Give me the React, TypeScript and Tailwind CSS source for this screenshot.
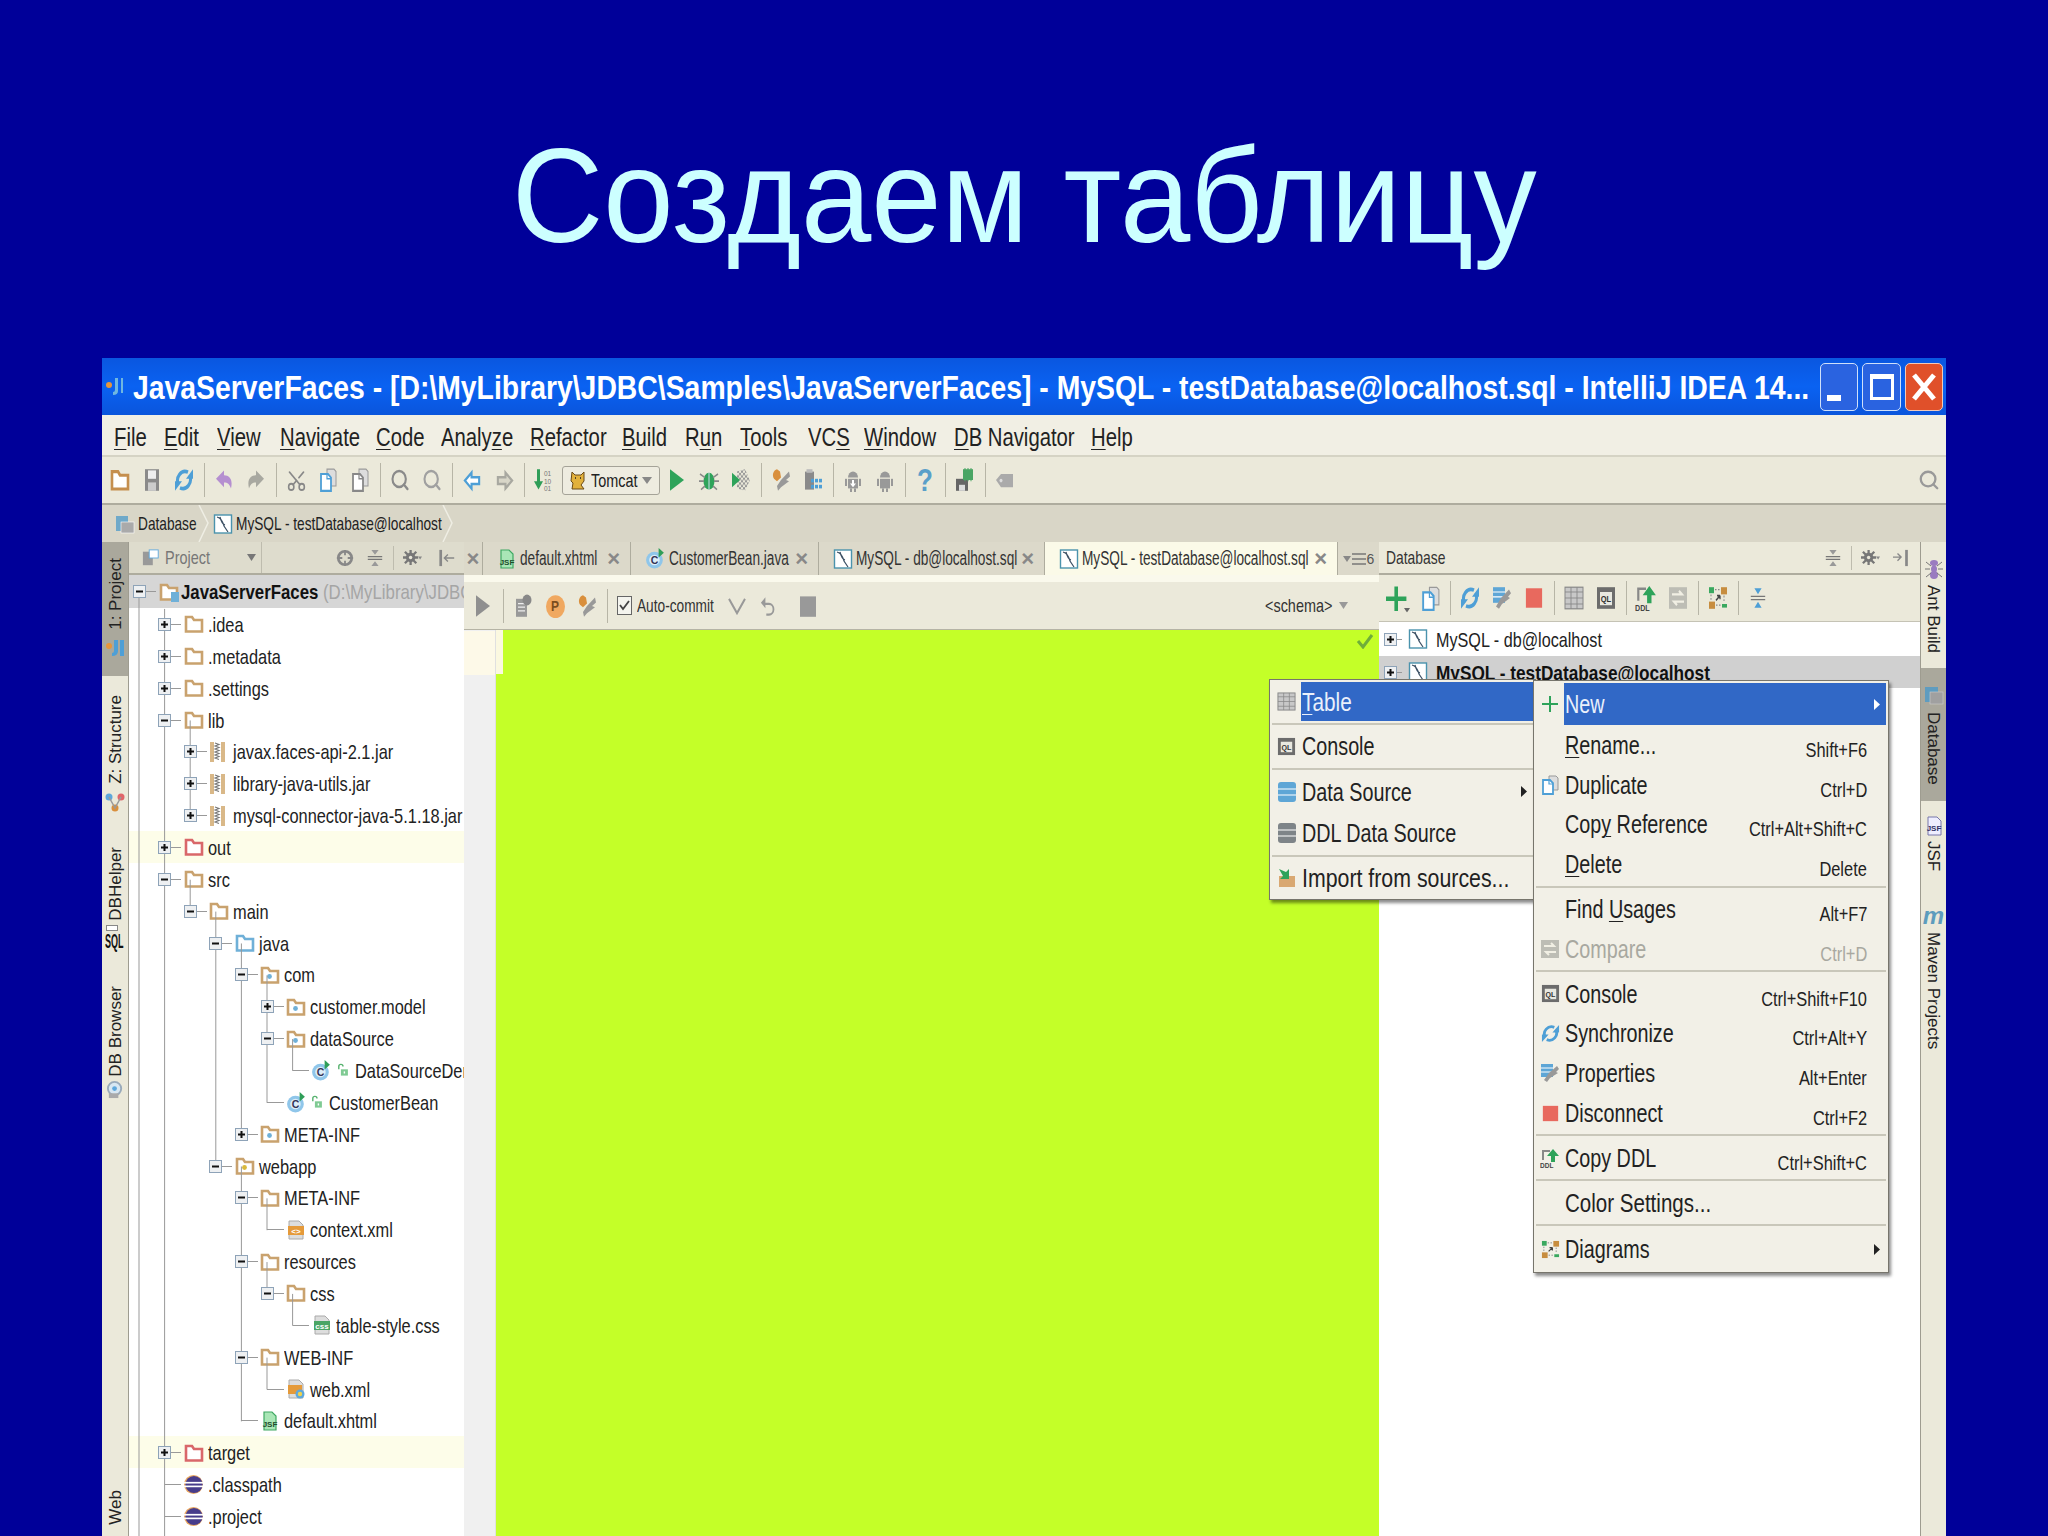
import React from 'react';
import { Scissors, Search } from 'lucide-react';

// text in the shot is a stretched capture, so everything is narrower than the font
const T = ({ children, s = 'scale-x-[0.76]', className = '' }: { children: React.ReactNode; s?: string; className?: string }) => (
  <span className={`inline-block origin-left whitespace-nowrap ${s} ${className}`}>{children}</span>
);

const I = ({ children, size = 20 }: { children: React.ReactNode; size?: number }) => (
  <svg viewBox="0 0 20 20" width={size} height={size} className="shrink-0">{children}</svg>
);

const Folder = ({ c = '#c9a26e', dot, size = 20, corner }: { c?: string; dot?: string; size?: number; corner?: boolean }) => (
  <I size={size}>
    <path d="M2 17.5V3h6l2 3h8v11.5z" fill="#fff" stroke={c} strokeWidth="2.6" />
    {dot && <circle cx="9.5" cy="11.5" r="2.4" fill={dot} />}
    {corner && <rect x="12" y="10" width="8" height="10" fill="#6fb0d8" />}
  </I>
);
const MySql = ({ size = 20 }: { size?: number }) => (
  <I size={size}>
    <rect x="1.5" y="1" width="17" height="18" fill="#fff" stroke="#4a93ad" strokeWidth="1.4" />
    <path d="M4 3c4 1 6 5 7 9l4 6M7 3c1 4 2 7 5 8" fill="none" stroke="#3b4f63" strokeWidth="1.2" />
  </I>
);
const Jar = () => (
  <I size={20}>
    <rect x="1" y="0" width="4" height="20" fill="#d9b888" />
    <rect x="12" y="0" width="4" height="20" fill="#d9b888" />
    <path d="M6 1l4 1.500-4 1.500 4 1.500-4 1.500 4 1.500-4 1.500 4 1.500-4 1.500 4 1.500-4 1.500 4 1.500" fill="none" stroke="#777" strokeWidth="1.100" />
  </I>
);
const ClassIcon = () => (
  <I size={21}>
    <circle cx="9" cy="11.500" r="8" fill="#8fc6ea" />
    <circle cx="9" cy="11.500" r="5" fill="#dcedf8" />
    <text x="5.500" y="15" fontSize="10" fontFamily="Liberation Sans" fontWeight="700" fill="#335">C</text>
    <path d="M13 0l5 4.500-5 4.500z" fill="#2f9e58" />
  </I>
);
const Lock = () => (
  <I size={14}>
    <path d="M4 9V5a3 3 0 0 1 6 0" fill="none" stroke="#57b26f" strokeWidth="2" />
    <rect x="7" y="9" width="10" height="9" fill="#7fca93" />
    <rect x="11" y="12" width="2" height="3" fill="#fff" />
  </I>
);
const DocFile = ({ c, label }: { c: string; label: string }) => (
  <I size={20}>
    <path d="M3 1h10l4 4v14H3z" fill="#ddd" stroke="#aaa" />
    <rect x="2" y="6" width="16" height="9" fill={c} />
    <text x="10" y="13.500" textAnchor="middle" fontSize="8" fontWeight="700" fontFamily="Liberation Sans" fill="#fff">{label}</text>
  </I>
);
const WebXml = () => (
  <I size={20}>
    <path d="M3 1h10l4 4v14H3z" fill="#ddd" stroke="#aaa" />
    <rect x="2" y="6" width="14" height="9" fill="#e59a3a" />
    <circle cx="14" cy="15" r="4.500" fill="#5da7dc" />
    <circle cx="14" cy="15" r="2.200" fill="#f0d24a" />
  </I>
);
const Jsf = () => (
  <I size={20}>
    <path d="M4 1h8l4 4v14H4z" fill="#a9e6b6" stroke="#3ea862" strokeWidth="1.200" />
    <text x="10" y="16" textAnchor="middle" fontSize="8" fontWeight="700" fontFamily="Liberation Sans" fill="#1e4d2d">JSF</text>
  </I>
);
const Eclipse = () => (
  <I size={21}>
    <circle cx="10" cy="10" r="9" fill="#e8a55f" />
    <circle cx="10.500" cy="10" r="8.200" fill="#473c8b" />
    <rect x="1" y="7.500" width="18.500" height="1.600" fill="#fff" />
    <rect x="1" y="11" width="18.500" height="1.600" fill="#fff" />
  </I>
);
const Sync = ({ size = 20 }: { size?: number }) => (
  <I size={size}>
    <path d="M14 3.500A7.500 7.500 0 0 0 4.500 14" fill="none" stroke="#4e9fd6" strokeWidth="3" />
    <path d="M6 16.500A7.500 7.500 0 0 0 15.500 6" fill="none" stroke="#4e9fd6" strokeWidth="3" />
    <path d="M12 9l7-8v8zM8 11l-7 8v-8z" fill="#4e9fd6" />
  </I>
);
const Turn = ({ c, flip }: { c: string; flip?: boolean }) => (
  <I>
    <path d="M2 9l8-7v4c6 0 9 4 7 11-2-4-3-5-7-5v4z" fill={c} transform={flip ? 'matrix(-1 0 0 1 20 0)' : undefined} />
  </I>
);
const Docs = ({ c = '#4e9fd6', size = 20 }: { c?: string; size?: number }) => (
  <I size={size}>
    <path d="M9 1h7l2 2v12H9z" fill="#ddd" stroke="#999" />
    <path d="M3 5h7l3 3v11H3z" fill="#fff" stroke={c} strokeWidth="1.800" />
    <path d="M9 5v4h4" fill="none" stroke={c} strokeWidth="1.200" />
  </I>
);
const Arrow = ({ c, fill = '#fff', flip }: { c: string; fill?: string; flip?: boolean }) => (
  <I size={19}>
    <path d="M9 3L2 10l7 7v-4h8V7H9z" fill={fill} stroke={c} strokeWidth="2.200" transform={flip ? 'matrix(-1 0 0 1 20 0)' : undefined} />
  </I>
);
const Make = () => (
  <I>
    <path d="M3 1h3v10h3l-4.500 7L0 11h3z" fill="#2f9e58" />
    <text x="10" y="7" fontSize="6.500" fontFamily="Liberation Sans" fill="#777">01</text>
    <text x="10" y="13" fontSize="6.500" fontFamily="Liberation Sans" fill="#777">10</text>
    <text x="10" y="19" fontSize="6.500" fontFamily="Liberation Sans" fill="#777">01</text>
  </I>
);
const Cat = () => (
  <I size={20}>
    <path d="M4 2l3 3h6l3-3v9l-3 4 3 4H4l1-6-2-2z" fill="#e2b13c" stroke="#6b4a16" strokeWidth="1" />
    <path d="M7 8h1M12 8h1" stroke="#222" strokeWidth="1.400" />
  </I>
);
const Play = ({ c = '#2ea35a' }: { c?: string }) => <I size={20}><path d="M3 1l14 9-14 9z" fill={c} /></I>;
const Bug = () => (
  <I>
    <ellipse cx="10" cy="11" rx="5.500" ry="7" fill="#2ea35a" />
    <path d="M10 4v14" stroke="#cde" strokeWidth="1" />
    <path d="M1 5l5 3M19 5l-5 3M0 11h5M20 11h-5M2 18l4-3M18 18l-4-3" stroke="#888" strokeWidth="1.400" />
  </I>
);
const Coverage = () => (
  <I>
    <defs><pattern id="cov" width="4" height="4" patternUnits="userSpaceOnUse"><rect width="2" height="2" fill="#999" /><rect x="2" y="2" width="2" height="2" fill="#999" /></pattern></defs>
    <path d="M6 3l8-2 5 9-5 9-8-2z" fill="url(#cov)" />
    <path d="M1 4l8 6-8 6z" fill="#2ea35a" />
  </I>
);
const Wrench = ({ top = '#d98f3c' }: { top?: string }) => (
  <I>
    <path d="M6 1a5 5 0 0 0-3 8l3 2 4-3-1-5z" fill={top} />
    <path d="M10 10l8-7 1 4-4 3 3 1-8 5-3 3-1-4z" fill="#999" />
  </I>
);
const Struct = () => (
  <I>
    <rect x="2" y="3" width="9" height="15" fill="#8a8a8a" />
    <rect x="3.500" y="1" width="6" height="3" fill="#bbb" />
    <g fill="#4e9fd6">
      <rect x="8" y="9" width="3" height="3" /><rect x="12" y="9" width="3" height="3" /><rect x="16" y="9" width="3" height="3" />
      <rect x="8" y="14" width="3" height="3" /><rect x="12" y="14" width="3" height="3" /><rect x="16" y="14" width="3" height="3" />
    </g>
  </I>
);
const Droid = ({ down }: { down?: boolean }) => (
  <I>
    <path d="M5 8a5 5 0 0 1 10 0z" fill="#999" />
    <rect x="5" y="9" width="10" height="8" fill="#999" />
    <rect x="2" y="9" width="2" height="6" fill="#999" /><rect x="16" y="9" width="2" height="6" fill="#999" />
    <rect x="7" y="17" width="2" height="3" fill="#999" /><rect x="11" y="17" width="2" height="3" fill="#999" />
    {down && <path d="M9 10h2v3h2l-3 3-3-3h2z" fill="#fff" />}
  </I>
);
const Sdk = () => (
  <I>
    <rect x="1" y="9" width="12" height="10" fill="#666" />
    <rect x="4" y="14" width="6" height="5" fill="#ddd" />
    <rect x="8" y="1" width="10" height="9" fill="#4aa564" />
    <path d="M10 0v11M13 0v11M16 0v11" stroke="#4aa564" />
  </I>
);
const Tag = () => <I><path d="M1 10l5-5h12v11H6z" fill="#aaa" /><circle cx="6" cy="10.500" r="1.500" fill="#ddd" /></I>;
const Stop = ({ c = '#e8695e', size = 18 }: { c?: string; size?: number }) => <I size={size}><rect x="1" y="1" width="18" height="18" fill={c} /></I>;
const Grid = ({ size = 20 }: { size?: number }) => (
  <I size={size}>
    <rect x="1" y="1" width="18" height="18" fill="#c8c8c8" stroke="#888" />
    <path d="M1 5h18M1 10h18M1 15h18M7 1v18M13 1v18" stroke="#888" strokeWidth=".8" />
  </I>
);
const Console = ({ size = 20 }: { size?: number }) => (
  <I size={size}>
    <rect x="1" y="1" width="18" height="18" fill="#6c6c6c" />
    <rect x="4" y="5" width="12" height="11" fill="#e8e8e0" />
    <text x="10" y="13.500" textAnchor="middle" fontSize="7.500" fontWeight="700" fontFamily="Liberation Sans" fill="#333">QL</text>
  </I>
);
const Stack = ({ c }: { c: string }) => (
  <I size={20}>
    <rect x="1" y="0" width="18" height="20" rx="3" fill={c} />
    <path d="M1 7h18M1 13h18" stroke="#fff" strokeWidth="1.200" />
  </I>
);
const Ddl = ({ size = 20 }: { size?: number }) => (
  <I size={size}>
    <path d="M3 12V3h7" fill="none" stroke="#888" strokeWidth="2" />
    <path d="M13 1l6 7h-4v6h-4V8H7z" fill="#2ea35a" />
    <text x="0" y="19.500" fontSize="6.500" fontWeight="700" fontFamily="Liberation Sans" fill="#444">DDL</text>
  </I>
);
const Compare = () => (
  <I>
    <rect x="1" y="1" width="18" height="18" fill="#bdbdb5" />
    <path d="M4 7h10l-3-3M16 13H6l3 3" fill="none" stroke="#f1efe4" strokeWidth="2" />
  </I>
);
const Diagram = ({ size = 20 }: { size?: number }) => (
  <I size={size}>
    <rect x="1" y="1" width="5" height="5" fill="#3aa85f" />
    <rect x="13" y="1" width="6" height="6" fill="#c78d3f" />
    <rect x="1" y="13" width="6" height="6" fill="#c78d3f" />
    <rect x="14" y="15" width="5" height="3" fill="#3aa85f" />
    <path d="M7 3h6M3 7v6M8 16h6M16 8v6" stroke="#888" strokeDasharray="1.500 1.500" />
    <path d="M8 12l4-4M12 8H9M12 8v3" fill="none" stroke="#444" strokeWidth="1.300" />
  </I>
);
const Collapse = ({ c = '#4e9fd6' }: { c?: string }) => (
  <I size={18}>
    <path d="M2 8.500h16M2 11.500h16" stroke="#777" strokeWidth="1.300" />
    <path d="M6 1h8l-4 5.500zM6 19h8l-4-5.500z" fill={c} />
  </I>
);
const Gear = () => (
  <I size={19}>
    <circle cx="8" cy="10" r="5" fill="#777" />
    <path d="M8 2v16M2 4l12 12M14 4L2 16M0 10h16" stroke="#777" strokeWidth="2.400" />
    <circle cx="8" cy="10" r="1.800" fill="#e8e6d8" />
    <path d="M16 9h4l-2 3z" fill="#888" />
  </I>
);
const PropsIcon = () => (
  <I size={20}>
    <rect x="1" y="1" width="12" height="13" fill="#5ea6d6" />
    <path d="M1 5h12M1 9h12" stroke="#fff" />
    <path d="M9 10l8-7 2 3-3 3 2 1-8 5-3 4-3-2z" fill="#999" />
  </I>
);

// ---- tree

type Node = { t: string; l: number; i: React.ReactNode; open?: boolean; leaf?: boolean; hl?: boolean; lock?: boolean };

const plain = <Folder />;
const pkg = <Folder dot="#6fb0d8" />;

const nodes: Node[] = [
  { t: '.idea', l: 1, i: plain },
  { t: '.metadata', l: 1, i: plain },
  { t: '.settings', l: 1, i: plain },
  { t: 'lib', l: 1, i: plain, open: true },
  { t: 'javax.faces-api-2.1.jar', l: 2, i: <Jar /> },
  { t: 'library-java-utils.jar', l: 2, i: <Jar /> },
  { t: 'mysql-connector-java-5.1.18.jar', l: 2, i: <Jar /> },
  { t: 'out', l: 1, i: <Folder c="#d9676a" />, hl: true },
  { t: 'src', l: 1, i: plain, open: true },
  { t: 'main', l: 2, i: plain, open: true },
  { t: 'java', l: 3, i: <Folder c="#6fb0d8" />, open: true },
  { t: 'com', l: 4, i: pkg, open: true },
  { t: 'customer.model', l: 5, i: pkg },
  { t: 'dataSource', l: 5, i: pkg, open: true },
  { t: 'DataSourceDemo', l: 6, i: <ClassIcon />, leaf: true, lock: true },
  { t: 'CustomerBean', l: 5, i: <ClassIcon />, leaf: true, lock: true },
  { t: 'META-INF', l: 4, i: pkg },
  { t: 'webapp', l: 3, i: <Folder dot="#d9b93c" />, open: true },
  { t: 'META-INF', l: 4, i: plain, open: true },
  { t: 'context.xml', l: 5, i: <DocFile c="#e59a3a" label="<>" />, leaf: true },
  { t: 'resources', l: 4, i: plain, open: true },
  { t: 'css', l: 5, i: plain, open: true },
  { t: 'table-style.css', l: 6, i: <DocFile c="#4aa564" label="css" />, leaf: true },
  { t: 'WEB-INF', l: 4, i: plain, open: true },
  { t: 'web.xml', l: 5, i: <WebXml />, leaf: true },
  { t: 'default.xhtml', l: 4, i: <Jsf />, leaf: true },
  { t: 'target', l: 1, i: <Folder c="#d9676a" />, hl: true },
  { t: '.classpath', l: 1, i: <Eclipse />, leaf: true },
  { t: '.project', l: 1, i: <Eclipse />, leaf: true },
];

// [level, from row, to row]
const guides: [number, number, number][] = [
  [0, 0, 40], [1, 0.5, 40], [2, 4, 7], [2, 9, 10], [3, 10, 18], [4, 11, 17], [4, 18, 26],
  [5, 12, 16], [5, 19, 20], [5, 21, 22], [5, 24, 25], [6, 14, 15], [6, 22, 23],
];

const Expander = ({ open }: { open?: boolean }) => (
  <svg width="13" height="13" viewBox="0 0 13 13" className="relative shrink-0">
    <rect x=".5" y=".5" width="12" height="12" fill="#eef0f2" stroke="#8ea3b8" />
    <rect x="3" y="5.500" width="7" height="2" fill="#111" />
    {!open && <rect x="5.500" y="3" width="2" height="7" fill="#111" />}
  </svg>
);

const TreeRow = ({ n }: { n: Node }) => (
  <div className={`flex h-[31.86px] items-center pt-[1px] ${n.hl ? 'bg-[#fdfde9]' : ''}`} style={{ paddingLeft: 3.5 + n.l * 25.6 }}>
    {n.leaf ? <div className="w-[6.5px] shrink-0" /> : <Expander open={n.open} />}
    <div className={`mr-[3.5px] h-px shrink-0 bg-[#999] ${n.leaf ? 'w-[16.5px]' : 'w-[10px]'}`} />
    <div className="flex w-[18px] shrink-0 justify-center">{n.i}</div>
    {n.lock && <div className="ml-[5px] shrink-0"><Lock /></div>}
    <div className="ml-[5px] text-[21px] leading-none text-[#222]"><T s="scale-x-[0.78]">{n.t}</T></div>
  </div>
);

const ProjectTree = () => (
  <div className="relative flex-1 overflow-hidden bg-white">
    <svg className="absolute left-0 top-0" width="335" height="970">
      {guides.map(([l, a, b], k) => (
        <line key={k} x1={10 + l * 25.6} x2={10 + l * 25.6} y1={18 + a * 31.86} y2={18 + b * 31.86} stroke="#999" />
      ))}
    </svg>
    <div className="flex h-[33px] items-center bg-[#d6d6d6] pl-[3.5px]">
      <Expander open />
      <div className="mr-[3.5px] h-px w-[10px] shrink-0 bg-[#999]" />
      <Folder corner />
      <div className="ml-[2px] whitespace-nowrap text-[21px] leading-none">
        <T s="scale-x-[0.8]" className="font-bold text-[#111]">JavaServerFaces <span className="font-normal text-[#a5a5a5]">(D:\MyLibrary\JDBC</span></T>
      </div>
    </div>
    {nodes.map((n, i) => <TreeRow key={i} n={n} />)}
  </div>
);

// ---- bars

const menus: [string, number, number][] = [
  ['File', 0, 32], ['Edit', 0, 35], ['View', 0, 45], ['Navigate', 0, 78], ['Code', 0, 47], ['Analyze', 5, 71], ['Refactor', 0, 74],
  ['Build', 0, 45], ['Run', 1, 37], ['Tools', 0, 50], ['VCS', 2, 38], ['Window', 0, 72], ['DB Navigator', 0, 119], ['Help', 0, 41],
];

const Mn = ({ text, at }: { text: string; at: number }) => (
  <>
    {at >= 0 ? text.slice(0, at) : text}
    {at >= 0 && <span className="underline decoration-1 underline-offset-3">{text[at]}</span>}
    {at >= 0 && text.slice(at + 1)}
  </>
);

// toolbar slot: the capture stretches icons a little taller than wide
const B = ({ children }: { children: React.ReactNode }) => <div className="flex h-[32px] w-[32px] shrink-0 scale-y-[1.2] items-center justify-center">{children}</div>;
const Sep = () => <div className="flex h-[34px] w-[8px] shrink-0 justify-center"><div className="h-full w-px bg-[#b7b5a6]" /></div>;

const Vert = ({ children, up }: { children: React.ReactNode; up?: boolean }) => (
  <span className={`block whitespace-nowrap text-[17px] leading-none text-[#222] [writing-mode:vertical-rl] ${up ? 'rotate-180' : ''}`}>{children}</span>
);

const TitleBar = () => (
  <div className="flex h-[57px] items-center bg-gradient-to-b from-[#0a57e0] via-[#0a62f2] to-[#0a55dc] pl-[3px] pr-[3px]">
    <svg width="20" height="22" viewBox="0 0 20 22" className="shrink-0">
      <circle cx="4" cy="9" r="3" fill="#e8953a" />
      <path d="M10 2h3v13q0 4-5 4v-3q2 0 2-2zM16 2h2v15h-2z" fill="#6fb7e0" />
    </svg>
    <div className="ml-[8px] min-w-0 flex-1 text-[34px] font-bold leading-none text-white">
      <T s="scale-x-[0.834]">JavaServerFaces - [D:\MyLibrary\JDBC\Samples\JavaServerFaces] - MySQL - testDatabase@localhost.sql - IntelliJ IDEA 14...</T>
    </div>
    <div className="flex gap-[4px]">
      <div className="flex h-[48px] w-[38px] items-end rounded-[5px] border border-[#cfe0fa] bg-[#2a63e0] pb-[9px] pl-[6px]">
        <div className="h-[6px] w-[14px] bg-white" />
      </div>
      <div className="flex h-[48px] w-[39px] items-center justify-center rounded-[5px] border border-[#cfe0fa] bg-[#2a63e0]">
        <div className="h-[26px] w-[24px] border-[3px] border-t-[5px] border-white" />
      </div>
      <div className="flex h-[48px] w-[38px] items-center justify-center rounded-[5px] border border-[#f2c9b8] bg-[#e0502a]">
        <svg width="28" height="32" viewBox="0 0 28 32"><path d="M4 4l20 24M24 4L4 28" stroke="#fff" strokeWidth="5" /></svg>
      </div>
    </div>
  </div>
);

const MenuBar = () => (
  <div className="flex h-[42px] items-center gap-[18px] border-b-2 border-[#d5d3c4] bg-[#f1efe4] pl-[12px] pt-[3px] text-[26px] leading-none text-[#222]">
    {menus.map(([m, at, w]) => (
      <div key={m} className="shrink-0" style={{ width: w }}><T s="scale-x-[0.78]"><Mn text={m} at={at} /></T></div>
    ))}
  </div>
);

const MainToolbar = () => (
  <div className="flex h-[48px] items-center border-b-2 border-[#aeac9e] bg-[#ebe9da] pl-[2px]">
    <B><Folder c="#c58f4e" size={20} /></B>
    <B><I size={20}><rect x="3" y="1" width="14" height="18" fill="#8a8a8a" /><rect x="6" y="2" width="8" height="7" fill="#eee" /><rect x="6" y="12" width="8" height="7" fill="#ccc" /></I></B>
    <B><Sync /></B>
    <Sep />
    <B><Turn c="#b58fd0" /></B>
    <B><Turn c="#a8a8a0" flip /></B>
    <Sep />
    <B><Scissors size={21} strokeWidth={1.800} className="-rotate-90 text-[#888]" /></B>
    <B><Docs /></B>
    <B><Docs c="#888" /></B>
    <Sep />
    <B><Search size={20} strokeWidth={2.500} className="text-[#8a8a8a]" /></B>
    <B><Search size={20} strokeWidth={2.500} className="text-[#a0a0a0]" /></B>
    <Sep />
    <B><Arrow c="#4e9fd6" /></B>
    <B><Arrow c="#a8a8a0" fill="#d8d6c8" flip /></B>
    <Sep />
    <B><Make /></B>
    <div className="ml-[2px] flex h-[29px] w-[98px] shrink-0 items-center rounded-[3px] border border-[#a5a398] bg-[#eeece0] pl-[5px] text-[19px] leading-none text-[#222]">
      <Cat />
      <div className="ml-[3px] min-w-0 flex-1"><T>Tomcat</T></div>
      <svg width="10" height="7" className="mr-[7px] shrink-0"><path d="M0 0h10L5 7z" fill="#888" /></svg>
    </div>
    <div className="w-px shrink-0" />
    <B><Play /></B>
    <B><Bug /></B>
    <B><Coverage /></B>
    <Sep />
    <B><Wrench /></B>
    <B><Struct /></B>
    <Sep />
    <B><Droid down /></B>
    <B><Droid /></B>
    <Sep />
    <B><span className="text-[26px] font-bold leading-none text-[#5a9fc9]">?</span></B>
    <Sep />
    <B><Sdk /></B>
    <Sep />
    <B><Tag /></B>
    <div className="ml-auto mr-[6px]"><Search size={22} strokeWidth={2.500} className="text-[#999]" /></div>
  </div>
);

const Chevron = () => (
  <svg width="12" height="37" viewBox="0 0 12 37" className="shrink-0"><path d="M1 0l9 18L1 37" fill="none" stroke="#efeee4" strokeWidth="1.500" /></svg>
);

const Breadcrumbs = () => (
  <div className="flex h-[37px] items-center bg-[#d9d6c7] pl-[13px] text-[19px] leading-none text-[#222]">
    <I><rect x="1" y="2" width="12" height="15" fill="#6fa9c9" /><rect x="6" y="8" width="13" height="11" fill="#aaa" stroke="#fff" strokeWidth=".6" /></I>
    <div className="ml-[3px] w-[60px] shrink-0"><T s="scale-x-[0.72]">Database</T></div>
    <Chevron />
    <div className="w-[3px] shrink-0" />
    <MySql />
    <div className="ml-[3px] w-[206px] shrink-0"><T s="scale-x-[0.72]">MySQL - testDatabase@localhost</T></div>
    <Chevron />
  </div>
);

const LeftStripe = () => (
  <div className="flex w-[27px] shrink-0 flex-col items-center border-r border-[#9e9c90] bg-[#ebe9da]">
    <div className="flex h-[134px] w-full flex-col items-center bg-[#aaa89c] pt-[16px]">
      <Vert up>1: Project</Vert>
      <div className="mt-[8px]"><svg width="20" height="20" viewBox="0 0 20 20"><circle cx="4" cy="8" r="3" fill="#e8953a" /><path d="M9 2h4v11q0 5-6 5v-3q2 0 2-2zM15 2h4v16h-4z" fill="#4e9fd6" /></svg></div>
    </div>
    <div className="mt-[17px] flex h-[92px] items-center"><Vert up>Z: Structure</Vert></div>
    <div className="mt-[7px]"><I><circle cx="4" cy="5" r="3.500" fill="#5da7dc" /><circle cx="16" cy="5" r="3.500" fill="#e0656a" /><circle cx="10" cy="16" r="3.500" fill="#d98f3c" /><path d="M4 5l6 11 6-11" fill="none" stroke="#999" strokeWidth="1.500" /></I></div>
    <div className="mt-[38px] flex h-[68px] items-center"><Vert up>DBHelper</Vert></div>
    <div className="mt-[7px] h-[25px] w-[20px] text-[20px] font-bold leading-none text-[#111]">
      <div className="ml-[1px] h-[6px] w-[12px] border border-[#888] bg-white" />
      <T s="scale-x-[0.45]" className="block">SQL</T>
    </div>
    <div className="mt-[36px] flex h-[91px] items-center"><Vert up>DB Browser</Vert></div>
    <div className="mt-[3px]"><I size={19}><circle cx="9" cy="9" r="7" fill="#d7e7f2" stroke="#9ab" strokeWidth="2" /><circle cx="9" cy="9" r="2.500" fill="#5da7dc" /><rect x="3" y="14" width="10" height="5" fill="#aaa" /></I></div>
    <div className="mt-[393px] flex h-[31px] items-center"><Vert up>Web</Vert></div>
  </div>
);

const RightStripe = () => (
  <div className="flex w-[26px] shrink-0 flex-col items-center border-l border-[#9e9c90] bg-[#ebe9da]">
    <div className="mt-[17px]"><I size={20}><ellipse cx="10" cy="4" rx="4" ry="3" fill="#9a7bc0" /><ellipse cx="10" cy="10" rx="3" ry="3.500" fill="#9a7bc0" /><ellipse cx="10" cy="16" rx="4" ry="4" fill="#9a7bc0" /><path d="M2 3l5 4M18 3l-5 4M1 10h5M19 10h-5M2 18l5-4M18 18l-5-4" stroke="#777" /></I></div>
    <div className="mt-[8px] flex h-[65px] items-center"><Vert>Ant Build</Vert></div>
    <div className="mt-[16px] flex h-[133px] w-full flex-col items-center bg-[#aaa89c] pt-[17px]">
      <I size={20}><rect x="1" y="2" width="13" height="15" fill="#5f9cbf" /><rect x="6" y="7" width="13" height="12" fill="#a0a0a0" stroke="#ccc" strokeWidth=".6" /></I>
      <div className="mt-[7px]"><Vert>Database</Vert></div>
    </div>
    <div className="mt-[15px]"><I size={20}><path d="M4 1h9l4 4v14H4z" fill="#eef" stroke="#77a" /><text x="10" y="15" textAnchor="middle" fontSize="8" fontWeight="700" fontFamily="Liberation Sans" fill="#336">JSF</text></I></div>
    <div className="mt-[7px] flex h-[26px] items-center"><Vert>JSF</Vert></div>
    <div className="mt-[40px] h-[14px] text-[24px] font-bold italic leading-[14px] text-[#5d9cbd]">m</div>
    <div className="mt-[9px]"><Vert>Maven Projects</Vert></div>
  </div>
);

const ProjectPanel = () => (
  <div className="flex w-[335px] shrink-0 flex-col">
    <div className="flex h-[33px] shrink-0 items-center border-b-2 border-[#aeac9e] bg-[#dedccd]">
      <div className="flex h-full w-[133px] shrink-0 items-center border-r border-[#bebcae] pl-[13px] text-[19px] leading-none text-[#777]">
        <I size={18}><rect x="1" y="3" width="11" height="15" fill="#999" /><rect x="8" y="1" width="10" height="9" fill="#fff" stroke="#5da7dc" /></I>
        <div className="ml-[5px] min-w-0 flex-1"><T>Project</T></div>
        <svg width="9" height="7" className="mr-[5px] shrink-0"><path d="M0 0h9L4.500 7z" fill="#777" /></svg>
      </div>
      <div className="ml-[74px] flex items-center">
        <I size={18}><circle cx="10" cy="10" r="7.500" fill="none" stroke="#888" strokeWidth="3" /><path d="M10 1v6M10 13v6M1 10h6M13 10h6" stroke="#888" strokeWidth="2" /></I>
        <div className="ml-[12px]"><Collapse c="#999" /></div>
        <div className="ml-[9px] h-[24px] w-px bg-[#bebcae]" />
        <div className="ml-[9px]"><Gear /></div>
        <div className="ml-[16px]"><I size={18}><path d="M3 1v18" stroke="#888" strokeWidth="3" /><path d="M18 10H7M11 6l-4 4 4 4" fill="none" stroke="#888" strokeWidth="1.500" /></I></div>
      </div>
    </div>
    <ProjectTree />
  </div>
);

const Tab = ({ w, icon, text, active }: { w: number; icon: React.ReactNode; text: string; active?: boolean }) => (
  <div
    className={`flex h-full shrink-0 items-center border-r pl-[14px] pr-[10px] text-[19.500px] leading-none text-[#333] ${active ? 'border-[#aeac9e] bg-[#fbfae8]' : 'border-[#aeac9e] bg-[#dcd9ca]'}`}
    style={{ width: w }}
  >
    {icon}
    <div className="ml-[3px] min-w-0 flex-1"><T s="scale-x-[0.7]">{text}</T></div>
    <span className="text-[22px] font-bold leading-none text-[#888]">×</span>
  </div>
);

const EditorColumn = () => (
  <div className="flex w-[915px] shrink-0 flex-col">
    <div className="flex h-[33px] shrink-0 items-center bg-[#dcd9ca]">
      <div className="flex h-full w-[19px] shrink-0 items-center justify-center border-r border-[#aeac9e] text-[22px] font-bold text-[#888]">×</div>
      <Tab w={148} icon={<Jsf />} text="default.xhtml" />
      <Tab w={188} icon={<ClassIcon />} text="CustomerBean.java" />
      <Tab w={226} icon={<MySql />} text="MySQL - db@localhost.sql" />
      <Tab w={293} icon={<MySql />} text="MySQL - testDatabase@localhost.sql" active />
      <div className="flex flex-1 items-center justify-center gap-[1px] text-[14px] leading-none text-[#555]">
        <svg width="8" height="6"><path d="M0 0h8L4 6z" fill="#888" /></svg>
        <svg width="14" height="14"><path d="M0 2h14M0 7h14M0 12h14" stroke="#777" strokeWidth="1.500" /></svg>
        <span>6</span>
      </div>
    </div>
    <div className="h-[7px] shrink-0 bg-[#faf9ec]" />
    <div className="flex h-[48px] shrink-0 items-center border-b border-[#b5b3a5] bg-[#ebe9da] pl-[3px] text-[19px] leading-none text-[#333]">
      <B><Play c="#8f8f8f" /></B>
      <Sep />
      <B><I><path d="M3 4h11v15H3z" fill="#999" /><path d="M5 8h7M5 11h7M5 14h7" stroke="#eee" /><circle cx="14" cy="5" r="4.500" fill="#888" /></I></B>
      <B><div className="flex h-[19px] w-[19px] items-center justify-center rounded-full bg-[#f0a860] text-[12px] font-bold text-[#7a4d1e]">P</div></B>
      <B><Wrench /></B>
      <Sep />
      <div className="ml-[6px] flex h-[19px] w-[15px] shrink-0 items-center justify-center border border-[#666] bg-[#f4f4ee]">
        <svg width="11" height="11" viewBox="0 0 11 11"><path d="M1 5l3 4 6-8" fill="none" stroke="#444" strokeWidth="1.800" /></svg>
      </div>
      <div className="ml-[5px] w-[76px] shrink-0"><T s="scale-x-[0.72]">Auto-commit</T></div>
      <div className="ml-[8px]"><B><svg width="18" height="16" viewBox="0 0 18 16"><path d="M1 2l8 12 8-12" fill="none" stroke="#999" strokeWidth="2" /></svg></B></div>
      <B><I size={18}><path d="M6 2L1 7l5 5V9h4a4 4 0 0 1 0 8H7v2h3a6 6 0 0 0 0-12H6z" fill="#999" /></I></B>
      <div className="ml-[7px]"><B><div className="h-[17px] w-[16px] bg-[#999]" /></B></div>
      <div className="ml-auto flex items-center pr-[31px]">
        <div className="w-[66px]"><T>&lt;schema&gt;</T></div>
        <svg width="9" height="7" className="ml-[8px]"><path d="M0 0h9L4.500 7z" fill="#999" /></svg>
      </div>
    </div>
    <div className="flex flex-1">
      <div className="w-[32px] shrink-0 border-r border-[#e0e0e0] bg-[#f0f0f0]">
        <div className="mt-[1px] h-[44px] bg-[#fdf9e8]" />
      </div>
      <div className="relative flex-1 bg-[#c4ff28]">
        <div className="h-[44px] w-[7px] bg-[#fbf8e0]" />
        <svg width="18" height="16" viewBox="0 0 18 16" className="absolute right-[5px] top-[3px]"><path d="M2 8l5 6 9-12" fill="none" stroke="#6fae3a" strokeWidth="3" /></svg>
      </div>
    </div>
  </div>
);

const DbPanel = () => (
  <div className="flex w-[541px] shrink-0 flex-col bg-white">
    <div className="flex h-[33px] shrink-0 items-center border-b-2 border-[#aeac9e] bg-[#ebe9da] pl-[7px] text-[19px] leading-none text-[#333]">
      <div className="w-[60px]"><T s="scale-x-[0.73]">Database</T></div>
      <div className="ml-auto flex items-center pr-[9px]">
        <Collapse c="#999" />
        <div className="mx-[9px] h-[24px] w-px bg-[#bebcae]" />
        <Gear />
        <div className="ml-[13px]"><I size={18}><path d="M0 9h9M5 5l4 4-4 4" fill="none" stroke="#888" strokeWidth="1.500" /><path d="M15 1v18" stroke="#888" strokeWidth="3" /></I></div>
      </div>
    </div>
    <div className="flex h-[47px] shrink-0 items-center border-b border-[#c5c3b5] bg-[#ebe9da] pl-[3px]">
      <B><I size={24}><path d="M7 2h3v7h7v3h-7v7H7v-7H0V9h7z" fill="#2ea35a" /><path d="M15 17h5l-2.500 3z" fill="#666" /></I></B>
      <B><Docs size={21} /></B>
      <Sep />
      <B><Sync /></B>
      <B><PropsIcon /></B>
      <B><Stop /></B>
      <Sep />
      <B><Grid /></B>
      <B><Console /></B>
      <Sep />
      <B><Ddl size={22} /></B>
      <B><Compare /></B>
      <Sep />
      <B><Diagram /></B>
      <Sep />
      <B><Collapse /></B>
    </div>
    <div className="flex h-[34px] shrink-0 items-center pl-[5px] text-[21px] leading-none text-[#222]">
      <Expander />
      <div className="mr-[6px] h-px w-[5px] shrink-0 bg-[#999]" />
      <MySql />
      <div className="ml-[8px]"><T s="scale-x-[0.77]">MySQL - db@localhost</T></div>
    </div>
    <div className="flex h-[32px] shrink-0 items-center bg-[#d0d0d0] pl-[5px] text-[21px] leading-none text-[#111]">
      <Expander />
      <div className="mr-[6px] h-px w-[5px] shrink-0 bg-[#999]" />
      <MySql />
      <div className="ml-[8px]"><T s="scale-x-[0.82]" className="font-bold">MySQL - testDatabase@localhost</T></div>
    </div>
  </div>
);

// ---- context menus

type Item = { t: string; at?: number; k?: string; icon?: React.ReactNode; sub?: boolean; on?: boolean; off?: boolean; h?: number; s?: string } | 'sep';

const subMenu: Item[] = [
  { t: 'Table', at: 0, icon: <Grid size={19} />, on: true, h: 39, s: 'scale-x-[0.8]' },
  'sep',
  { t: 'Console', icon: <Console size={19} />, h: 40 },
  'sep',
  { t: 'Data Source', icon: <Stack c="#5ea6d6" />, sub: true, h: 41 },
  { t: 'DDL Data Source', icon: <Stack c="#7e8488" />, h: 41 },
  'sep',
  { t: 'Import from sources...', icon: <I><rect x="2" y="8" width="16" height="11" fill="#d9a872" /><path d="M2 1l7 3 3-3v10H3l3-3z" fill="#2ea35a" /></I>, s: 'scale-x-[0.82]' },
];

const mainMenu: Item[] = [
  { t: 'New', icon: <I size={20}><path d="M9 2h2v7h7v2h-7v7H9v-7H2V9h7z" fill="#2ea35a" /></I>, sub: true, on: true, h: 42 },
  { t: 'Rename...', at: 0, k: 'Shift+F6' },
  { t: 'Duplicate', icon: <Docs size={20} />, k: 'Ctrl+D' },
  { t: 'Copy Reference', at: 3, k: 'Ctrl+Alt+Shift+C' },
  { t: 'Delete', at: 0, k: 'Delete' },
  'sep',
  { t: 'Find Usages', at: 5, k: 'Alt+F7' },
  { t: 'Compare', icon: <Compare />, k: 'Ctrl+D', off: true },
  'sep',
  { t: 'Console', icon: <Console size={19} />, k: 'Ctrl+Shift+F10' },
  { t: 'Synchronize', icon: <Sync size={19} />, k: 'Ctrl+Alt+Y' },
  { t: 'Properties', icon: <PropsIcon />, k: 'Alt+Enter' },
  { t: 'Disconnect', icon: <Stop size={17} />, k: 'Ctrl+F2' },
  'sep',
  { t: 'Copy DDL', icon: <Ddl />, k: 'Ctrl+Shift+C' },
  'sep',
  { t: 'Color Settings...', s: 'scale-x-[0.79]' },
  'sep',
  { t: 'Diagrams', icon: <Diagram size={19} />, sub: true, h: 43 },
];

const Menu = ({ items, gutter, kRight, className }: { items: Item[]; gutter: number; kRight: number; className: string }) => (
  <div className={`absolute flex flex-col border border-[#77756c] bg-[#f2f0e7] px-[2px] pt-[2px] shadow-[2px_3px_3px_rgba(0,0,0,0.45)] ${className}`}>
    {items.map((it, i) =>
      it === 'sep' ? (
        <div key={i} className="flex h-[5px] shrink-0 items-center"><div className="h-[2px] w-full bg-[#c9c7ba]" /></div>
      ) : (
        <div key={i} className="flex shrink-0 items-center" style={{ height: it.h ?? 39.8 }}>
          <div className="flex shrink-0 justify-center" style={{ width: gutter }}>{it.icon}</div>
          <div className={`flex h-full min-w-0 flex-1 items-center pl-[1px] text-[26px] leading-none ${it.on ? 'bg-[#3168c6] text-[#eaf0fb]' : it.off ? 'text-[#a8a8a0]' : 'text-[#222]'}`}>
            <div className="min-w-0 flex-1"><T s={it.s}><Mn text={it.t} at={it.at ?? -1} /></T></div>
            {it.k && <div className="pt-[10px] text-[20px]" style={{ paddingRight: kRight }}><T s="scale-x-[0.82]" className="origin-right">{it.k}</T></div>}
            {it.sub && <svg width="6" height="11" className="mr-[6px] shrink-0"><path d="M0 0l6 5.500L0 11z" fill={it.on ? '#fff' : '#222'} /></svg>}
          </div>
        </div>
      ),
    )}
  </div>
);

const IdeWindow = () => (
  <div className="relative ml-[102px] flex h-[1178px] w-[1844px] flex-col overflow-hidden">
    <TitleBar />
    <MenuBar />
    <MainToolbar />
    <Breadcrumbs />
    <div className="flex min-h-0 flex-1">
      <LeftStripe />
      <ProjectPanel />
      <EditorColumn />
      <DbPanel />
      <RightStripe />
    </div>
    <Menu items={subMenu} gutter={29} kRight={0} className="left-[1167px] top-[321px] h-[221px] w-[267px]" />
    <Menu items={mainMenu} gutter={28} kRight={19} className="left-[1431px] top-[322px] h-[593px] w-[356px]" />
  </div>
);

export default function App() {
  return (
    <div className="h-[1536px] w-[2048px] overflow-hidden bg-[#000099] font-['Liberation_Sans',Arial,sans-serif]">
      <div className="flex h-[358px] items-start justify-center pt-[116px]">
        <h1 className="scale-x-[0.95] text-[133px] font-normal leading-[160px] text-[#ccffff]">Создаем таблицу</h1>
      </div>
      <IdeWindow />
    </div>
  );
}
